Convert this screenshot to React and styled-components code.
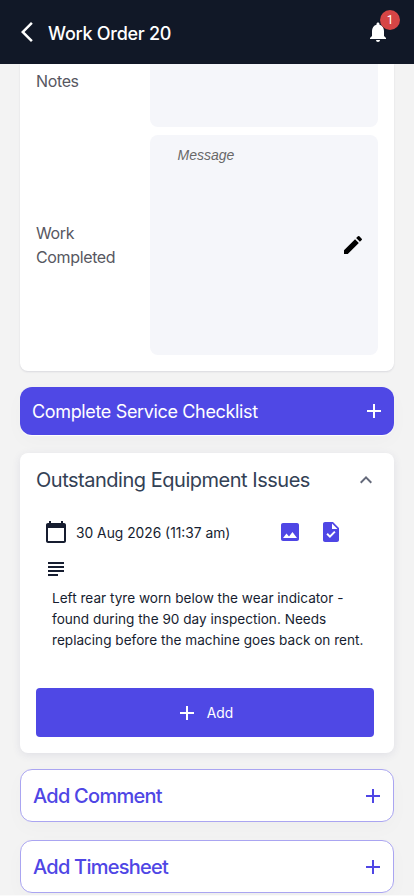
import React from "react";
import styled, { createGlobalStyle, css } from "styled-components";
import {
  MdAdd,
  MdArrowBackIosNew,
  MdCalendarToday,
  MdEdit,
  MdExpandLess,
  MdImage,
  MdNotifications,
  MdSubject,
  MdTask,
} from "react-icons/md";

const GlobalStyle = createGlobalStyle`
  * { box-sizing: border-box; }
  body { margin: 0; background: #fafafa; overflow: hidden; }
  button { font: inherit; border: 0; margin: 0; padding: 0; background: none; color: inherit; }
  svg { display: block; flex: none; }
`;

const Page = styled.div`
  height: 895px;
  overflow: hidden;
  background: #f3f3f3;
  color: #161d30;
  font-family: Inter, "Liberation Sans", sans-serif;
`;

const Header = styled.header`
  height: 64px;
  padding: 0 24px 0 15px;
  display: flex;
  align-items: center;
  background: #111827;
  color: #fff;
`;

const Title = styled.h1`
  flex: 1;
  margin: 3px 0 0 9px;
  font-size: 18px;
  font-weight: 500;
  line-height: 28px;
  letter-spacing: -0.27px;
`;

const Bell = styled.button`
  position: relative;
`;

const Badge = styled.span`
  position: absolute;
  top: -10px;
  left: 14px;
  width: 20px;
  height: 20px;
  border-radius: 10px;
  background: #d64545;
  font: 400 12px/20px Roboto, sans-serif;
  text-align: center;
`;

const Content = styled.main`
  padding: 0 20px;
  display: flex;
  flex-direction: column;
`;

const Card = styled.section`
  background: #fff;
  border-radius: 0 0 8px 8px;
  padding: 0 16px 16px;
  height: 307px;
  box-shadow: 0 1px 2px rgba(30, 30, 70, 0.12);
`;

const Field = styled.div`
  display: grid;
  grid-template-columns: 114px 228px;
  height: ${(p) => p.$height}px;
  margin-bottom: 8px;
`;

const Label = styled.div`
  align-self: ${(p) => (p.$top ? "start" : "center")};
  padding-top: ${(p) => (p.$top ? 5 : 0)}px;
  font-size: 16px;
  line-height: 24px;
  letter-spacing: -0.36px;
  color: #575761;
`;

const TextBox = styled.div`
  display: flex;
  justify-content: space-between;
  align-items: flex-start;
  padding: 10px 13px 0 27.5px;
  background: #f5f6fa;
  border-radius: ${(p) => (p.$cut ? "0 0 8px 8px" : "8px")};
  svg { align-self: center; margin-bottom: 10px; color: #000; }
`;

const Placeholder = styled.span`
  font: italic 14px/20px "Liberation Sans", sans-serif;
  color: #686868;
`;

const ActionButton = styled.button`
  display: flex;
  align-items: center;
  justify-content: space-between;
  border-radius: 12px;
  text-align: left;
  ${(p) =>
    p.$filled
      ? css`
          height: 47.5px;
          margin: 16px 0 18px;
          padding: 0 8px 0 12px;
          background: #4f48e5;
          color: #fff;
          font-size: 18px;
          letter-spacing: -0.35px;
          box-shadow: 0 1px 1px #fff, 0 6px 20px rgba(0, 0, 0, 0.025);
        `
      : css`
          height: 53px;
          margin-bottom: 18px;
          padding: 0 8px 0 12px;
          border: 1px solid #aaa5f1;
          background: #fff;
          color: #4f46e5;
          font-size: 20px;
          font-weight: 450;
          letter-spacing: -0.74px;
          box-shadow: 0 6px 20px rgba(0, 0, 0, 0.025);
        `}
`;

const ActionLabel = styled.span`
  padding-top: ${(p) => (p.$lowered ? 2 : 0)}px;
`;

const IssuesCard = styled.section`
  height: 300.5px;
  margin-bottom: 16px;
  padding: 14px 20px 16px 16px;
  border-radius: 8px;
  background: #fff;
  box-shadow: 0 2px 8px rgba(60, 60, 120, 0.1);
`;

const CardHeader = styled.div`
  display: flex;
  justify-content: space-between;
  align-items: center;
  height: 27px;
  svg { color: #64697a; margin-right: -4px; }
`;

const CardTitle = styled.h2`
  margin: 0;
  font-size: 20px;
  font-weight: 400;
  line-height: 28px;
  letter-spacing: -0.48px;
  white-space: nowrap;
  color: #334155;
`;

const IssueMeta = styled.div`
  display: flex;
  align-items: center;
  height: 24px;
  margin: 26px 0 0 8px;
`;

const IssueDate = styled.time`
  width: 202px;
  margin: 3px 0 0 8px;
  font-size: 13.8px;
  line-height: 20px;
`;

const IssueIcons = styled.div`
  display: flex;
  gap: 17px;
  color: #4f46e5;
`;

const NoteIcon = styled.div`
  margin: 13.5px 0 0 8px;
`;

const IssueText = styled.p`
  margin: 6.5px 0 0 16px;
  font-size: 13.6px;
  line-height: 21px;
  white-space: nowrap;
`;

const TextLine = styled.span`
  display: block;
`;

const AddButton = styled.button`
  display: flex;
  align-items: center;
  justify-content: center;
  gap: 8px;
  width: 338px;
  height: 49px;
  margin-top: 37px;
  padding: 1px 2px 0 0;
  border-radius: 4px;
  background: #4f48e5;
  color: #fff;
  font-size: 13.8px;
`;

const noteLines = [
  "Left rear tyre worn below the wear indicator -",
  "found during the 90 day inspection. Needs",
  "replacing before the machine goes back on rent.",
];

export default function App() {
  return (
    <>
      <GlobalStyle />
      <Page>
        <Header>
          <MdArrowBackIosNew size={24} />
          <Title>Work Order 20</Title>
          <Bell aria-label="Notifications">
            <MdNotifications size={24} />
            <Badge>1</Badge>
          </Bell>
        </Header>
        <Content>
          <Card>
            <Field $height={63}>
              <Label $top>Notes</Label>
              <TextBox $cut />
            </Field>
            <Field $height={220}>
              <Label>
                Work
                <br />
                Completed
              </Label>
              <TextBox>
                <Placeholder>Message</Placeholder>
                <MdEdit size={24} />
              </TextBox>
            </Field>
          </Card>
          <ActionButton $filled>
            <ActionLabel $lowered>Complete Service Checklist</ActionLabel>
            <MdAdd size={24} />
          </ActionButton>
          <IssuesCard>
            <CardHeader>
              <CardTitle>Outstanding Equipment Issues</CardTitle>
              <MdExpandLess size={24} />
            </CardHeader>
            <IssueMeta>
              <MdCalendarToday size={24} />
              <IssueDate>30 Aug 2026 (11:37 am)</IssueDate>
              <IssueIcons>
                <MdImage size={24} />
                <MdTask size={24} />
              </IssueIcons>
            </IssueMeta>
            <NoteIcon>
              <MdSubject size={24} />
            </NoteIcon>
            <IssueText>
              {noteLines.map((line) => (
                <TextLine key={line}>{line}</TextLine>
              ))}
            </IssueText>
            <AddButton>
              <MdAdd size={24} />
              Add
            </AddButton>
          </IssuesCard>
          <ActionButton>
            <ActionLabel>Add Comment</ActionLabel>
            <MdAdd size={24} />
          </ActionButton>
          <ActionButton>
            <ActionLabel>Add Timesheet</ActionLabel>
            <MdAdd size={24} />
          </ActionButton>
        </Content>
      </Page>
    </>
  );
}
